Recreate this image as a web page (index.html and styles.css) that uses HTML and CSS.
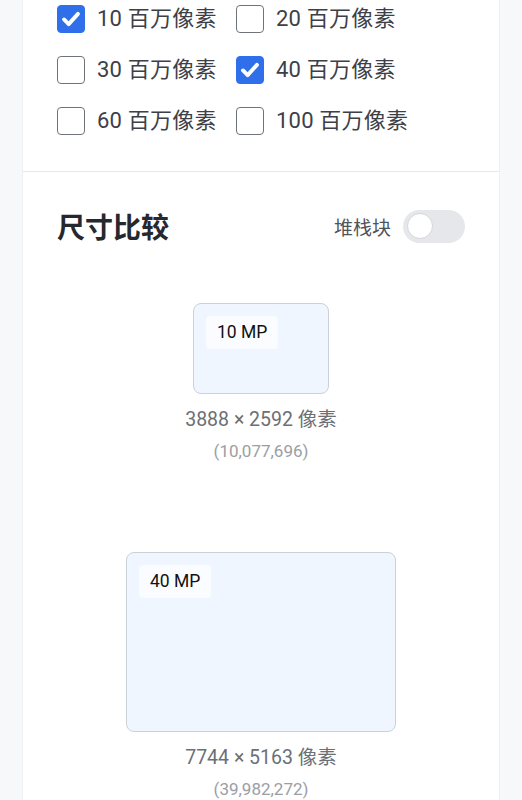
FILE: index.html
```html
<!DOCTYPE html>
<html lang="zh-CN">
<head>
<meta charset="utf-8">
<link rel="stylesheet" href="styles.css">
</head>
<body>
<div class="card">
  <section class="options">
    <div class="grid">
      <label class="opt"><span class="box checked"><svg viewBox="0 0 28 28"><path d="M6.5 14.5l5 5 10-11" fill="none" stroke="#fff" stroke-width="4.2" stroke-linecap="round" stroke-linejoin="round"/></svg></span><span class="txt">10 百万像素</span></label>
      <label class="opt"><span class="box"></span><span class="txt">20 百万像素</span></label>
      <label class="opt"><span class="box"></span><span class="txt">30 百万像素</span></label>
      <label class="opt"><span class="box checked"><svg viewBox="0 0 28 28"><path d="M6.5 14.5l5 5 10-11" fill="none" stroke="#fff" stroke-width="4.2" stroke-linecap="round" stroke-linejoin="round"/></svg></span><span class="txt">40 百万像素</span></label>
      <label class="opt"><span class="box"></span><span class="txt">60 百万像素</span></label>
      <label class="opt"><span class="box"></span><span class="txt">100 百万像素</span></label>
    </div>
  </section>
  <section class="compare">
    <div class="head">
      <h2>尺寸比较</h2>
      <div class="stack"><span>堆栈块</span><span class="toggle"><span class="knob"></span></span></div>
    </div>
    <div class="items">
      <div class="item">
        <div class="rect r10"><span class="tag">10 MP</span></div>
        <div class="dims">3888 × 2592 像素</div>
        <div class="total">(10,077,696)</div>
      </div>
      <div class="item">
        <div class="rect r40"><span class="tag">40 MP</span></div>
        <div class="dims">7744 × 5163 像素</div>
        <div class="total">(39,982,272)</div>
      </div>
    </div>
  </section>
</div>
</body>
</html>
```
FILE: styles.css
```css
html, body {
  margin: 0;
  padding: 0;
  background: #f7f8fa;
  font-family: Roboto, "Noto Sans CJK SC", sans-serif;
  color: #3b3f46;
}
.card {
  margin: 0 22px 0 22px;
  width: 476px;
  background: #fff;
  border-left: 1px solid #eef0f3;
  border-right: 1px solid #eef0f3;
  min-height: 800px;
}
.options {
  padding: 0 34px 36px 34px;
  border-bottom: 1px solid #e6e8ec;
}
.grid {
  display: grid;
  grid-template-columns: 179px 1fr;
  row-gap: 23px;
  padding-top: 5px;
}
.opt {
  display: flex;
  align-items: center;
  gap: 12px;
  height: 28px;
}
.box {
  box-sizing: border-box;
  width: 28px;
  height: 28px;
  border: 1.6px solid #6f737a;
  border-radius: 4px;
  flex: none;
  display: flex;
}
.box.checked {
  background: #2f6fe9;
  border-color: #2f6fe9;
}
.box svg {
  width: 26px;
  height: 26px;
  margin: -0.4px;
}
.txt {
  font-size: 22px;
  line-height: 28px;
  color: #3d4047;
  letter-spacing: 0.2px;
}
.compare {
  padding: 32px 34px 0 34px;
}
.head {
  display: flex;
  align-items: center;
  justify-content: space-between;
  height: 44px;
}
.head h2 {
  margin: 0;
  font-size: 28px;
  font-weight: 700;
  color: #25282e;
  font-family: "Noto Sans CJK SC", sans-serif;
}
.stack {
  display: flex;
  align-items: center;
  gap: 12px;
  font-size: 19px;
  color: #4f535b;
}
.toggle {
  width: 62px;
  height: 33px;
  border-radius: 17px;
  background: #e5e7eb;
  display: flex;
  align-items: center;
  padding-left: 4px;
  box-sizing: border-box;
}
.knob {
  width: 24px;
  height: 24px;
  border-radius: 50%;
  background: #fff;
  border: 1.5px solid #d4d6da;
}
.items {
  display: flex;
  flex-direction: column;
  align-items: center;
  gap: 90px;
  padding-top: 55px;
}
.item {
  display: flex;
  flex-direction: column;
  align-items: center;
}
.rect {
  box-sizing: border-box;
  background: #eff6ff;
  border: 1px solid #ccd1d8;
  border-radius: 8px;
  padding: 12px;
  display: flex;
  align-items: flex-start;
}
.r10 { width: 136px; height: 91px; }
.r40 { width: 270px; height: 180px; }
.tag {
  background: #fafcff;
  border-radius: 4px;
  padding: 0 11px;
  height: 33px;
  line-height: 33px;
  font-size: 17.5px;
  font-weight: 400;
  color: #111;
}
.dims {
  margin-top: 12px;
  font-size: 19.5px;
  line-height: 27px;
  color: #6b6f76;
}
.total {
  margin-top: 7px;
  font-size: 17px;
  line-height: 22px;
  color: #9a9ea5;
}
```
